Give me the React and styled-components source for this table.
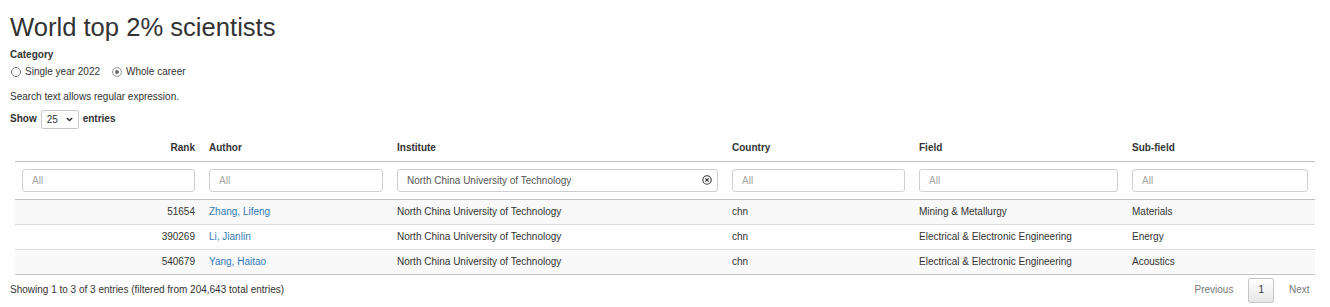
import styled, { createGlobalStyle } from "styled-components"

const rows = [
  { rank: 51654, author: "Zhang, Lifeng", institute: "North China University of Technology", country: "chn", field: "Mining & Metallurgy", sub: "Materials" },
  { rank: 390269, author: "Li, Jianlin", institute: "North China University of Technology", country: "chn", field: "Electrical & Electronic Engineering", sub: "Energy" },
  { rank: 540679, author: "Yang, Haitao", institute: "North China University of Technology", country: "chn", field: "Electrical & Electronic Engineering", sub: "Acoustics" },
]

const columns = [
  { key: "rank", label: "Rank", width: 187, right: true },
  { key: "author", label: "Author", width: 188 },
  { key: "institute", label: "Institute", width: 335 },
  { key: "country", label: "Country", width: 187 },
  { key: "field", label: "Field", width: 213 },
  { key: "sub", label: "Sub-field", width: 190 },
]

export default function App() {
  return (
    <Page>
      <GlobalStyle />
      <Title>World top 2% scientists</Title>
      <Label>Category</Label>
      <RadioRow>
        <RadioItem><Radio type="radio" name="cat" readOnly /> Single year 2022</RadioItem>
        <RadioItem><Radio type="radio" name="cat" defaultChecked /> Whole career</RadioItem>
      </RadioRow>
      <Note>Search text allows regular expression.</Note>
      <LengthRow>
        <b>Show</b>
        <SelectWrap>
          <Select defaultValue="25">
            <option>10</option>
            <option>25</option>
            <option>50</option>
            <option>100</option>
          </Select>
          <Chevron width="7" height="5" viewBox="0 0 7 5">
            <path d="M0.8 0.9 L3.5 3.6 L6.2 0.9" fill="none" stroke="#333" strokeWidth="1.4" />
          </Chevron>
        </SelectWrap>
        <b>entries</b>
      </LengthRow>

      <TableWrap>
        <Table>
          <colgroup>
            {columns.map(c => <col key={c.key} style={{ width: c.width }} />)}
          </colgroup>
          <thead>
            <tr>
              {columns.map(c => <Th key={c.key} $right={c.right}>{c.label}</Th>)}
            </tr>
            <FilterRow>
              {columns.map(c => (
                <FilterCell key={c.key}>
                  {c.key === "institute" ? (
                    <InputBox>
                      <FilterInput defaultValue="North China University of Technology" />
                      <ClearIcon width="10" height="10" viewBox="0 0 10 10">
                        <circle cx="5" cy="5" r="4.2" fill="none" stroke="#333" strokeWidth="1.1" />
                        <path d="M3.3 3.3 L6.7 6.7 M6.7 3.3 L3.3 6.7" stroke="#333" strokeWidth="1.1" />
                      </ClearIcon>
                    </InputBox>
                  ) : (
                    <InputBox><FilterInput placeholder="All" /></InputBox>
                  )}
                </FilterCell>
              ))}
            </FilterRow>
          </thead>
          <tbody>
            {rows.map((r, i) => (
              <Row key={r.rank} $striped={i % 2 === 0}>
                <Td $right>{r.rank}</Td>
                <Td><Link href="#">{r.author}</Link></Td>
                <Td>{r.institute}</Td>
                <Td>{r.country}</Td>
                <Td>{r.field}</Td>
                <Td>{r.sub}</Td>
              </Row>
            ))}
          </tbody>
        </Table>
      </TableWrap>

      <Footer>
        <span>Showing 1 to 3 of 3 entries (filtered from 204,643 total entries)</span>
        <Pager>
          <PageButton>Previous</PageButton>
          <PageButton $current>1</PageButton>
          <PageButton>Next</PageButton>
        </Pager>
      </Footer>
    </Page>
  )
}

const GlobalStyle = createGlobalStyle`
  html, body {
    margin: 0;
    padding: 0;
    background: #fff;
  }
  body {
    font-family: "Liberation Sans", Arial, sans-serif;
    font-size: 10px;
    line-height: 14px;
    color: #333;
  }
  * { box-sizing: border-box; }
`

const Page = styled.div`
  width: 1330px;
  height: 307px;
  padding: 13px 10px 0;
  overflow: hidden;
`

const Title = styled.h1`
  margin: 0;
  font-size: 25.6px;
  line-height: 28.6px;
  font-weight: 400;
  color: #333;
`

const Label = styled.div`
  margin-top: 6px;
  font-weight: bold;
`

const RadioRow = styled.div`
  display: flex;
  gap: 11px;
  margin-top: 3px;
`

const RadioItem = styled.label`
  display: flex;
  align-items: center;
  gap: 4px;
`

const Radio = styled.input`
  appearance: none;
  margin: 0 0 0 1px;
  width: 10px;
  height: 10px;
  border-radius: 50%;
  border: 1px solid #808080;
  background: #fff;

  &:checked {
    border-color: #a8a8a8;
    background: #6e6e6e;
    box-shadow: inset 0 0 0 2px #fff;
  }
`

const Note = styled.div`
  margin-top: 11px;
`

const LengthRow = styled.div`
  display: flex;
  align-items: center;
  gap: 4px;
  margin-top: 6px;
  height: 19px;
`

const SelectWrap = styled.span`
  position: relative;
  display: inline-block;
`

const Select = styled.select`
  appearance: none;
  width: 38px;
  height: 19px;
  padding: 0 0 0 5px;
  border: 1px solid #c8c8c8;
  border-radius: 2px;
  background: #fff;
  font-family: inherit;
  font-size: 10px;
  color: #333;
`

const Chevron = styled.svg`
  position: absolute;
  right: 6px;
  top: 7px;
  pointer-events: none;
`

const TableWrap = styled.div`
  margin-top: 6px;
  padding-left: 5px;
`

const Table = styled.table`
  width: 1300px;
  table-layout: fixed;
  border-collapse: collapse;
`

const Th = styled.th`
  padding: 6px 7px;
  text-align: ${p => (p.$right ? "right" : "left")};
  font-weight: bold;
  border-bottom: 1px solid #bdbdbd;
`

const FilterRow = styled.tr`
  border-bottom: 1px solid #bdbdbd;
`

const FilterCell = styled.td`
  padding: 7px;
`

const InputBox = styled.div`
  position: relative;
`

const FilterInput = styled.input`
  display: block;
  width: 100%;
  height: 23px;
  padding: 0 24px 0 9px;
  border: 1px solid #cfcfcf;
  border-radius: 3px;
  font-family: inherit;
  font-size: 10px;
  color: #555;
  outline: none;

  &::placeholder {
    color: #a5a5a5;
  }
`

const ClearIcon = styled.svg`
  position: absolute;
  right: 6px;
  top: 6.5px;
`

const Row = styled.tr`
  background: ${p => (p.$striped ? "#f9f9f9" : "#fff")};
  border-bottom: 1px solid #dcdcdc;

  &:last-child {
    border-bottom-color: #c4c4c4;
  }
`

const Td = styled.td`
  padding: 5px 7px;
  text-align: ${p => (p.$right ? "right" : "left")};
  white-space: nowrap;
`

const Link = styled.a`
  color: #337ab7;
  text-decoration: none;
`

const Footer = styled.div`
  display: flex;
  justify-content: space-between;
  align-items: center;
  padding-top: 3px;
`

const Pager = styled.div`
  display: flex;
  gap: 4px;
`

const PageButton = styled.span`
  display: flex;
  align-items: center;
  height: 25px;
  padding: 0 9.5px;
  border: 1px solid ${p => (p.$current ? "#c6c6c6" : "transparent")};
  border-radius: 2px;
  color: ${p => (p.$current ? "#333" : "#777")};
  background: ${p => (p.$current ? "linear-gradient(#ffffff, #e6e6e6)" : "transparent")};
`
